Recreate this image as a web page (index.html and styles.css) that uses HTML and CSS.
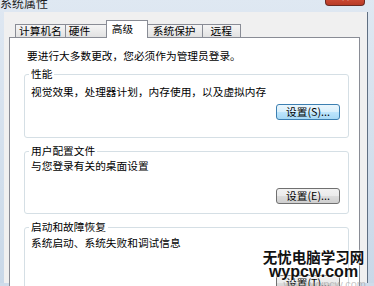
FILE: index.html
```html
<!DOCTYPE html>
<html lang="zh-CN">
<head>
  <meta charset="UTF-8" />
  <meta name="viewport" content="width=device-width, initial-scale=1.0" />
  <title>系统属性</title>
  <link rel="stylesheet" href="styles.css">
</head>
<body>
  <div class="window">
    <div class="titlebar">
      <span class="title">系统属性</span>
      <span class="close">✕</span>
    </div>
    <div class="client">
      <div class="tabs">
        <div class="tab">计算机名</div>
        <div class="tab">硬件</div>
        <div class="tab active">高级</div>
        <div class="tab">系统保护</div>
        <div class="tab">远程</div>
      </div>
      <div class="page">
        <p class="intro">要进行大多数更改，您必须作为管理员登录。</p>
        <fieldset class="group perf">
          <legend>性能</legend>
          <p>视觉效果，处理器计划，内存使用，以及虚拟内存</p>
          <div class="actions"><button class="btn default">设置(S)...</button></div>
        </fieldset>
        <fieldset class="group profile">
          <legend>用户配置文件</legend>
          <p>与您登录有关的桌面设置</p>
          <div class="actions"><button class="btn">设置(E)...</button></div>
        </fieldset>
        <fieldset class="group startup">
          <legend>启动和故障恢复</legend>
          <p>系统启动、系统失败和调试信息</p>
          <div class="actions"><button class="btn">设置(T)...</button></div>
        </fieldset>
      </div>
    </div>
  </div>

  <div class="watermark">
    <div class="wm-cn">无忧电脑学习网</div>
    <div class="wm-en">wypcw.com</div>
    <div class="wm-faint">www.wypcw.com</div>
  </div>
</body>
</html>
```

FILE: styles.css
```css
body {
  margin: 0;
  width: 374px;
  height: 286px;
  overflow: hidden;
  font-family: "Noto Sans CJK SC", "Noto Sans", sans-serif;
  font-size: 10.7px;
  color: #000;
  background: #cfdcea;
}
.window {
  position: relative;
  height: 286px;
  background: linear-gradient(#dfe8f2, #c9d8e8);
}
.titlebar {
  position: relative;
  height: 15px;
}
.title {
  display: block;
  font-size: 12px;
  line-height: 12px;
  margin-top: -3px;
  color: #1e1e1e;
}
.close {
  position: absolute;
  left: 325px;
  top: -7px;
  width: 40px;
  height: 16px;
  box-sizing: border-box;
  border: 1px solid #6b2a22;
  border-top: none;
  border-radius: 0 0 4px 4px;
  background: linear-gradient(#eaa898, #cf4c36 55%, #b83b27);
  color: #fff;
  font-size: 11px;
  line-height: 12px;
  text-align: center;
  font-weight: bold;
}
.client {
  box-sizing: border-box;
  margin-left: 4px;
  width: 364px;
  height: 271px;
  padding: 8px 7px 0 5px;
  background: #f0f0f0;
  border-right: 1px solid #5f6f82;
}
.tabs {
  display: flex;
  align-items: flex-end;
  height: 17px;
  padding-left: 6px;
}
.tab {
  box-sizing: border-box;
  height: 13px;
  min-width: 42px;
  padding: 0 3px;
  line-height: 12px;
  border: 1px solid #898c95;
  border-bottom: none;
  background: linear-gradient(#f5f5f5, #e2e2e2);
  white-space: nowrap;
}
.tab + .tab {
  border-left: none;
}
.tab:nth-child(4) {
  padding: 0 6px 0 7px;
}
.tab:last-child {
  min-width: 0;
  padding: 0 8px;
}
.tab.active {
  position: relative;
  z-index: 1;
  height: 18px;
  margin: 0 -2px -1px;
  padding: 0 5px;
  line-height: 15px;
  border-left: 1px solid #898c95;
  background: #fff;
}
.page {
  height: 260px;
  padding: 11px 10px 0 14px;
  background: #fff;
  border: 1px solid #898c95;
}
.intro {
  margin: 0 0 4px 3px;
  line-height: 14px;
}
.group {
  margin: 0 0 6px;
  padding: 0 8px 17px 6px;
  min-width: 0;
  border: 1px solid #d5dfe5;
  border-radius: 3px;
}
.group legend {
  padding: 0 2px;
  margin-left: -2px;
  line-height: 14px;
}
.group p {
  margin: 4px 0 0;
  line-height: 14px;
}
.actions {
  display: flex;
  justify-content: flex-end;
  margin-top: 5px;
}
.profile {
  padding-bottom: 9px;
}
.profile p {
  margin-top: 1px;
}
.profile .actions {
  margin-top: 15px;
}
.startup p {
  margin-top: 2px;
}
.startup .actions {
  margin-top: 25px;
}
.btn {
  width: 64px;
  height: 16px;
  padding: 0;
  font: inherit;
  line-height: 14px;
  color: #000;
  border: 1px solid #707070;
  border-radius: 3px;
  background: linear-gradient(#f2f2f2, #ebebeb 50%, #dddddd 50%, #cfcfcf);
}
.btn.default {
  border-color: #3c7fb1;
  background: linear-gradient(#eaf6fd, #d9f0fc 50%, #bee6fd 50%, #a7d9f5);
}
.watermark {
  position: absolute;
  left: 261px;
  top: 249px;
  width: 105px;
  text-align: center;
  font-weight: bold;
  color: #111;
  text-shadow: 0 0 2px #fff, 0 0 2px #fff;
}
.wm-cn {
  font-size: 14.5px;
  line-height: 15px;
}
.wm-en {
  font-family: "Liberation Sans", Arial, sans-serif;
  font-size: 16px;
  line-height: 15px;
}
.wm-faint {
  font-family: "Liberation Sans", Arial, sans-serif;
  font-weight: normal;
  font-size: 11px;
  line-height: 10px;
  color: rgba(160, 160, 160, 0.6);
  text-shadow: none;
  text-align: right;
}
```
